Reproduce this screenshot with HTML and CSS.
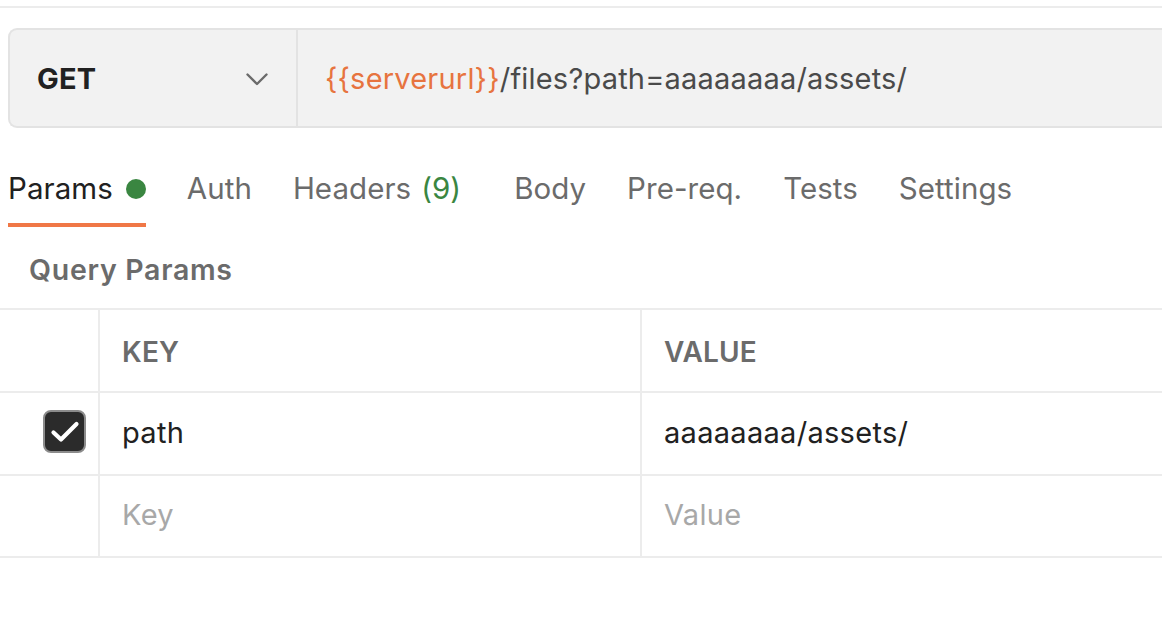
FILE: index.html
```html
<!DOCTYPE html>
<html>
<head>
<meta charset="utf-8">
<link rel="stylesheet" href="styles.css">
</head>
<body>
<div class="topline"></div>
<div class="request">
  <div class="method">
    <span class="method-name">GET</span>
    <svg class="chevron" width="22" height="13" viewBox="0 0 22 13"><polyline points="1.5,1.5 11,11 20.5,1.5" fill="none" stroke="#6b6b6b" stroke-width="2.4" stroke-linecap="round" stroke-linejoin="round"/></svg>
  </div>
  <div class="url"><span class="var">{{serverurl}}</span>/files?path=aaaaaaaa/assets/</div>
</div>
<div class="tabs">
  <div class="tab active">Params <span class="dot"></span></div>
  <div class="tab">Auth</div>
  <div class="tab tab-wide">Headers <span class="count">(9)</span></div>
  <div class="tab">Body</div>
  <div class="tab">Pre-req.</div>
  <div class="tab">Tests</div>
  <div class="tab">Settings</div>
</div>
<div class="section-title">Query Params</div>
<div class="table">
  <div class="row head">
    <div class="cell check"></div>
    <div class="cell key">KEY</div>
    <div class="cell value">VALUE</div>
  </div>
  <div class="row">
    <div class="cell check">
      <span class="checkbox"><svg width="30" height="24" viewBox="0 0 30 24"><polyline points="3.5,12.5 11,19.5 26.5,4" fill="none" stroke="#fff" stroke-width="4.2" stroke-linecap="round" stroke-linejoin="round"/></svg></span>
    </div>
    <div class="cell key text">path</div>
    <div class="cell value text">aaaaaaaa/assets/</div>
  </div>
  <div class="row">
    <div class="cell check"></div>
    <div class="cell key placeholder">Key</div>
    <div class="cell value placeholder">Value</div>
  </div>
</div>
</body>
</html>
```
FILE: styles.css
```css
* { box-sizing: border-box; }
body {
  margin: 0;
  font-family: Inter, "Noto Sans", sans-serif;
  background: #fff;
  color: #212121;
  overflow: hidden;
}
.topline {
  height: 2px;
  margin-top: 6px;
  background: #ececec;
}
.request {
  display: flex;
  margin: 20px 0 0 8px;
  height: 100px;
  background: #f2f2f2;
  border: 2px solid #e3e3e3;
  border-right: none;
  border-radius: 9px 0 0 9px;
}
.method {
  width: 288px;
  flex: none;
  display: flex;
  align-items: center;
  justify-content: space-between;
  padding: 0 28px 0 27px;
  border-right: 2px solid #e3e3e3;
}
.method-name {
  font-size: 29px;
  font-weight: 700;
  color: #212121;
  letter-spacing: 0.2px;
}
.chevron { margin-top: 2px; }
.url {
  display: flex;
  align-items: center;
  padding-left: 27px;
  font-size: 29px;
  letter-spacing: 0.2px;
  color: #4a4a4a;
  white-space: nowrap;
}
.var { color: #e7743f; }
.tabs {
  display: flex;
  margin: 40px 0 0 8px;
  gap: 41px;
}
.tab {
  display: flex;
  align-items: center;
  height: 59px;
  padding-bottom: 16px;
  border-bottom: 4px solid transparent;
  font-size: 29.5px;
  letter-spacing: 0.05px;
  color: #6b6b6b;
  white-space: nowrap;
}
.tab.active {
  color: #212121;
  border-bottom-color: #f07746;
}
.tab-wide { margin-right: 12px; }
.dot {
  display: inline-block;
  width: 20px;
  height: 20px;
  border-radius: 50%;
  background: #3a8641;
  margin-left: 13px;
  margin-top: 2px;
}
.count { color: #3a8641; margin-left: 10px; }
.section-title {
  margin: 23px 0 0 29px;
  height: 40px;
  line-height: 40px;
  font-size: 28.5px;
  font-weight: 600;
  letter-spacing: 0.7px;
  color: #6b6b6b;
}
.table {
  margin-top: 18px;
  border-top: 2px solid #ececec;
}
.row {
  display: flex;
  height: 83px;
  border-bottom: 2px solid #ececec;
}
.row:last-child { height: 82px; }
.cell {
  display: flex;
  align-items: center;
  padding-left: 22px;
  font-size: 29px;
  letter-spacing: 0.3px;
}
.cell.check {
  width: 100px;
  flex: none;
  justify-content: flex-end;
  padding: 0 12px 0 0;
  border-right: 2px solid #ececec;
}
.cell.key {
  width: 542px;
  flex: none;
  border-right: 2px solid #ececec;
}
.cell.value { flex: 1; }
.head .cell {
  font-size: 28px;
  font-weight: 600;
  letter-spacing: 0.2px;
  color: #6b6b6b;
  padding-top: 2px;
}
.text { color: #212121; padding-bottom: 3px; }
.placeholder { color: #a8a8a8; padding-bottom: 3px; }
.checkbox {
  width: 43px;
  height: 43px;
  border-radius: 8px;
  background: #2b2b2b;
  border: 2px solid #8c8c8c;
  display: flex;
  align-items: center;
  justify-content: center;
  margin-top: -4px;
}
```
